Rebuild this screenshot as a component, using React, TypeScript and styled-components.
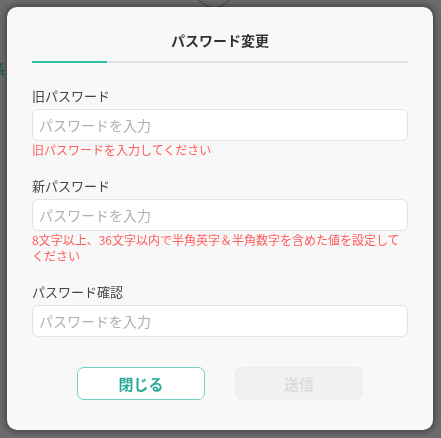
import React from 'react';
import styled, { createGlobalStyle } from 'styled-components';

const GlobalStyle = createGlobalStyle`
  html, body {
    margin: 0;
    padding: 0;
    width: 100%;
    height: 100%;
    overflow: hidden;
  }
  body {
    font-family: "Noto Sans CJK JP", "Noto Sans", sans-serif;
  }
  * {
    box-sizing: border-box;
  }
`;

// dimmed page behind the dialog
const Overlay = styled.div`
  position: fixed;
  inset: 0;
  background: #6c6c6c;
  padding: 7px 8px 9px 7px;
  display: flex;
  align-items: flex-start;
  justify-content: center;
`;

// bits of the underlying page that show through the overlay
const BackdropRing = styled.div`
  position: absolute;
  left: 195px;
  top: -30px;
  width: 38px;
  height: 38px;
  border-radius: 50%;
  border: 1.5px solid #3f3f3f;
`;

const BackdropGlyph = styled.span<{ $top: number }>`
  position: absolute;
  left: -8px;
  top: ${(p) => p.$top}px;
  font-size: 13px;
  line-height: 16px;
  font-weight: 700;
  color: #1f5a55;
`;

const Modal = styled.div`
  position: relative;
  width: 100%;
  background: #f8f8f8;
  border-radius: 10px;
  box-shadow: 0 0 6px 2px rgba(0, 0, 0, 0.35);
  padding: 23px 25px 30px 25px;
  display: flex;
  flex-direction: column;
`;

const Title = styled.h2`
  margin: 0;
  text-align: center;
  font-size: 14px;
  line-height: 20px;
  font-weight: 700;
  color: #333;
`;

const TabBar = styled.div`
  margin-top: 11px;
  height: 2px;
  background: #e3e3e3;
`;

const TabIndicator = styled.div`
  width: 75px;
  height: 2px;
  background: #2fbfa8;
`;

const Form = styled.form`
  display: flex;
  flex-direction: column;
  gap: 19px;
  margin-top: 24px;
`;

const Field = styled.div`
  display: flex;
  flex-direction: column;
`;

const Label = styled.label`
  font-size: 13px;
  line-height: 18px;
  color: #444;
  margin-bottom: 4px;
`;

const Input = styled.input`
  height: 32px;
  width: 100%;
  border: 1px solid #e4e4e4;
  border-radius: 6px;
  background: #fff;
  padding: 0 6px;
  font-family: inherit;
  font-size: 14px;
  color: #333;
  outline: none;

  &::placeholder {
    color: #aab0b4;
  }
`;

const ErrorText = styled.p`
  margin: 1px 0 0;
  font-size: 12px;
  line-height: 16px;
  color: #ff5b5b;
`;

const Actions = styled.div`
  display: flex;
  justify-content: center;
  gap: 30px;
  margin-top: 30px;
`;

const Button = styled.button<{ $variant: 'outline' | 'disabled' }>`
  width: 128px;
  height: 33px;
  border-radius: 7px;
  font-family: inherit;
  font-size: 15px;
  font-weight: 700;
  cursor: ${(p) => (p.$variant === 'disabled' ? 'default' : 'pointer')};
  border: ${(p) => (p.$variant === 'outline' ? '1.5px solid #6dd2c3' : '1px solid #ededed')};
  background: ${(p) => (p.$variant === 'outline' ? '#fff' : '#f1f1f1')};
  color: ${(p) => (p.$variant === 'outline' ? '#2aab9a' : '#dcdcdc')};
`;

const fields = [
  { label: '旧パスワード', error: '旧パスワードを入力してください' },
  {
    label: '新パスワード',
    error: '8文字以上、36文字以内で半角英字＆半角数字を含めた値を設定してください',
  },
  { label: 'パスワード確認', error: '' },
];

const App: React.FC = () => {
  return (
    <>
      <GlobalStyle />
      <Overlay>
        <BackdropRing />
        <BackdropGlyph $top={61}>系</BackdropGlyph>
        <Modal>
          <Title>パスワード変更</Title>
          <TabBar>
            <TabIndicator />
          </TabBar>
          <Form onSubmit={(e) => e.preventDefault()}>
            {fields.map((f) => (
              <Field key={f.label}>
                <Label>{f.label}</Label>
                <Input type="password" placeholder="パスワードを入力" />
                {f.error && <ErrorText>{f.error}</ErrorText>}
              </Field>
            ))}
          </Form>
          <Actions>
            <Button type="button" $variant="outline">
              閉じる
            </Button>
            <Button type="button" $variant="disabled" disabled>
              送信
            </Button>
          </Actions>
        </Modal>
      </Overlay>
    </>
  );
};

export default App;
